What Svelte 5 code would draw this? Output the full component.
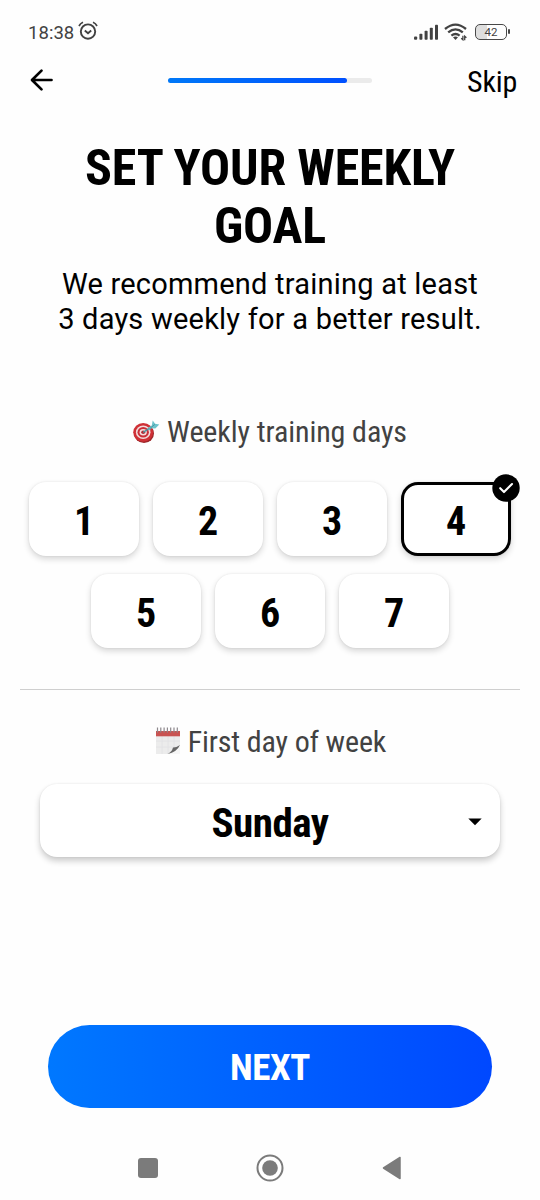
<script>
  const rows = [[1, 2, 3, 4], [5, 6, 7]];
  let selected = $state(4);
</script>

<main class="screen">
  <header class="status">
    <span class="time">18:38</span>
    <svg class="alarm" width="20" height="20" viewBox="0 0 20 20" fill="none" stroke="#424242" stroke-width="1.9">
      <circle cx="10" cy="10.6" r="7.2" />
      <path d="M6.8 9.5 10 12.2 13.2 9.5" />
      <path d="M1 5Q2.3 2.4 5 1.3M15 1.3Q17.7 2.4 19 5" stroke-width="1.7" />
    </svg>
    <span class="spacer"></span>
    <svg class="signal" width="25" height="17" viewBox="0 0 25 17" fill="#424242">
      <rect x="0" y="12.5" width="3.2" height="3.3" rx="1" />
      <rect x="5.4" y="9.8" width="3" height="6" rx=".8" />
      <rect x="10.6" y="6.8" width="3" height="9" rx=".8" />
      <rect x="15.8" y="3.8" width="3" height="12" rx=".8" />
      <rect x="21" y=".8" width="3" height="15" rx=".8" />
    </svg>
    <svg class="wifi" width="24" height="18" viewBox="0 0 24 18" fill="none" stroke="#424242" stroke-width="2.3">
      <path d="M1 6Q11.5-2.8 22 6" />
      <path d="M4.2 9.4Q11.5 3.3 18.8 9.4" />
      <path d="M7.4 12.6Q11.5 9.4 15.6 12.6" />
      <path d="m9 14.2 2.5 2.8 2.5-2.8q-2.5-1.6-5 0Z" fill="#424242" stroke="none" />
      <path d="M18.9 12.8v4l-1.7-1.5M20.7 17.2v-4l1.7 1.5" stroke-width="1.3" />
    </svg>
    <span class="battery"><span class="cell"><b>42</b></span><i></i></span>
  </header>

  <nav class="top">
    <svg width="24" height="24" viewBox="0 0 24 24" fill="none" stroke="#000" stroke-width="2.7" stroke-linecap="round" stroke-linejoin="round">
      <path d="M21.5 12H2.5M11.5 2.6 2 12l9.5 9.4" />
    </svg>
    <div class="progress"><span></span></div>
    <span class="skip cond">Skip</span>
  </nav>

  <h1 class="cond">SET YOUR WEEKLY<br />GOAL</h1>
  <p class="lead">We recommend training at least<br />3 days weekly for a better result.</p>

  <h2 class="days-title cond">
    <svg width="28" height="24" viewBox="0 0 28 24">
      <ellipse cx="12" cy="13.5" rx="10" ry="9.5" fill="#9c2528" />
      <ellipse cx="11.2" cy="12.3" rx="10" ry="9.4" fill="#cf3036" />
      <ellipse cx="11.2" cy="12.3" rx="7.3" ry="6.8" fill="#f2dddd" />
      <ellipse cx="11.2" cy="12.3" rx="5.7" ry="5.2" fill="#c92f38" />
      <ellipse cx="11.2" cy="12.3" rx="3.6" ry="3.3" fill="#f2dddd" />
      <ellipse cx="11.2" cy="12.3" rx="2" ry="1.8" fill="#b32932" />
      <path d="M11.2 12.3 19 7.2" stroke="#4a96a2" stroke-width="1.4" />
      <path d="m16.2 7.8 3.6-2.3.9-5.1 2.4 3.4 4.2.6-4 4.2-3.7-.4-2.3 2.2Z" fill="#6cc3cb" />
      <path d="m17.5 8.8 5.3-4.4" fill="none" stroke="#3f8c98" stroke-width=".8" />
    </svg>
    <span>Weekly training days</span>
  </h2>

  <section class="days">
    {#each rows as row}
      <div class="row">
        {#each row as day}
          <button class="day cond" class:selected={selected === day} onclick={() => (selected = day)}>
            {day}
            {#if selected === day}
              <svg class="check" width="28" height="28" viewBox="0 0 28 28">
                <circle cx="14" cy="14" r="13.7" />
                <path d="m8.2 14.2 3.8 3.9 8-8" fill="none" stroke="#fff" stroke-width="2.1" stroke-linecap="round" stroke-linejoin="round" />
              </svg>
            {/if}
          </button>
        {/each}
      </div>
    {/each}
  </section>

  <hr />

  <h2 class="week-title cond">
    <svg width="26" height="28" viewBox="0 0 26 28">
      <path d="M1 4h24v23H1Z" fill="#ececec" />
      <path d="M1 14h24M1 20h24M7 9v18M13 9v18M19 9v18" stroke="#e2e2e4" stroke-width=".8" />
      <path d="M1 4h24v5.3H1Z" fill="#c95351" />
      <path d="M2.5.5v5M5.8.5v5M9.1.5v5M12.4.5v5M15.7.5v5M19 .5v5M22.3.5v5" stroke="#8d878c" stroke-width="1.2" />
      <path d="M25 18v9H12.5Q21 24 25 18Z" fill="#f6f6f6" />
      <path d="M12.5 27Q17 24.8 18 20.5q3 .2 7-2.5-3 7-12.5 9Z" fill="#666" />
    </svg>
    <span>First day of week</span>
  </h2>

  <button class="select cond">
    <span>Sunday</span>
    <svg width="14" height="8" viewBox="0 0 14 8"><path d="M.3.5h13.4L7 7.3Z" /></svg>
  </button>

  <button class="next cond">NEXT</button>

  <footer>
    <svg width="22" height="22" viewBox="0 0 22 22"><rect x="1" y="1" width="20" height="20" rx="3" fill="#7b7b7b" /></svg>
    <svg width="28" height="28" viewBox="0 0 28 28"><circle cx="14" cy="14" r="12.5" fill="none" stroke="#7b7b7b" stroke-width="2" /><circle cx="14" cy="14" r="7.8" fill="#7b7b7b" /></svg>
    <svg width="20" height="24" viewBox="0 0 20 24"><path d="M18 1.5v21L1.5 12Z" fill="#7b7b7b" stroke="#7b7b7b" stroke-width="1.5" stroke-linejoin="round" /></svg>
  </footer>
</main>

<style>
  :global(body) { margin: 0; background: #fefefe; }
  * { box-sizing: border-box; }
  .screen {
    width: 540px; height: 1200px; overflow: hidden;
    display: flex; flex-direction: column;
    background: #fefefe; color: #000; font-family: Roboto, sans-serif;
  }
  .cond { font-family: "Roboto Condensed", Roboto, sans-serif; font-stretch: 75%; }
  svg { display: block; flex: none; }
  button { border: 0; padding: 0; color: #000; background: #fff; }
  .status { height: 60px; padding: 3px 30px 0 28px; display: flex; align-items: center; color: #424242; }
  .time { font-size: 18.5px; letter-spacing: .05px; margin-top: 2px; }
  .alarm { margin-left: 4px; margin-top: -1px; }
  .spacer { flex: 1; }
  .wifi { margin: 1px 7px 0 5px; }
  .signal { margin-top: 1px; }
  .battery { display: flex; align-items: center; }
  .cell {
    width: 32px; height: 16px; border: 1.5px solid #484848; border-radius: 5px;
    display: grid; place-items: center; background: linear-gradient(90deg, #dedede 11px, transparent 11px);
  }
  .cell b { font-size: 11.5px; line-height: 13px; font-weight: 400; padding-top: 1px; }
  .battery i { width: 2px; height: 5px; margin-left: 1px; border-radius: 1px; background: #484848; }
  .top { height: 40px; padding: 0 23px 0 30px; display: flex; align-items: center; }
  .progress { width: 204px; height: 5px; margin: 1px auto 0 114px; border-radius: 3px; background: #ebebeb; }
  .progress span { display: block; width: 179px; height: 5px; border-radius: 3px; background: linear-gradient(90deg, #0078f8, #0050ff); }
  .skip { font-size: 30px; line-height: 40px; margin-top: 4px; letter-spacing: -.2px; }
  h1 { margin: 39px 0 0; text-align: center; font-size: 50px; line-height: 58px; font-weight: 700; letter-spacing: -.12px; }
  .lead { margin: 12px 0 0; height: 70px; text-align: center; font-size: 29px; line-height: 35px; letter-spacing: .22px; }
  h2 { margin: 0; height: 36px; display: flex; align-items: center; justify-content: center; font-size: 30px; line-height: 36px; font-weight: 400; color: #424242; gap: 7px; letter-spacing: -.1px; }
  .days-title { margin-top: 77px; }
  .days-title svg { margin-left: -1px; }
  .days { margin-top: 32px; display: flex; flex-direction: column; gap: 18px; }
  .row { display: flex; justify-content: center; gap: 14px; }
  .day {
    position: relative; width: 110px; height: 74px; border-radius: 17px; padding-top: 5px;
    font-size: 40px; font-weight: 700; line-height: 69px;
    box-shadow: 0 3px 6px rgba(0, 0, 0, .16), 0 0 2px rgba(0, 0, 0, .09);
  }
  .day.selected { border: 3px solid #000; line-height: 63px; }
  .check { position: absolute; top: -11px; right: -12px; }
  hr { width: 500px; height: 1px; margin: 41px auto 0; border: 0; background: #cfcfcf; }
  .week-title { margin-top: 34px; letter-spacing: -.15px; }
  .week-title svg { margin-left: 1px; margin-top: -2px; }
  .select {
    width: 460px; height: 73px; margin: 24px auto 0; padding: 3px 18px 0; border-radius: 17px;
    display: grid; grid-template-columns: 14px 1fr 14px; align-items: center;
    font-size: 41px; font-weight: 700; line-height: 60px; letter-spacing: -.5px;
    box-shadow: 0 4px 6px rgba(0, 0, 0, .2), 0 0 2px rgba(0, 0, 0, .09);
  }
  .select span { grid-column: 2; padding-top: 2px; }
  .next {
    width: 444px; height: 83px; margin: 168px auto 0; padding-top: 2px; border-radius: 42px;
    background: linear-gradient(90deg, #0078ff, #0048ff); color: #fff; font-size: 37px; font-weight: 700; letter-spacing: -.4px;
  }
  footer { height: 92px; padding: 27px 138px 0 137px; display: flex; align-items: center; justify-content: space-between; }
  footer svg:nth-child(2) { margin-right: 2px; }
</style>
